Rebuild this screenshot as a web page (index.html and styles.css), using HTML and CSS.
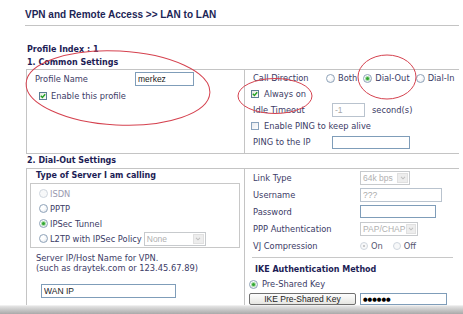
FILE: index.html
```html
<!DOCTYPE html>
<html>
<head>
<meta charset="utf-8">
<title>LAN to LAN</title>
<link rel="stylesheet" href="styles.css">
</head>
<body>
<div class="page">
  <div class="title">VPN and Remote Access &gt;&gt; LAN to LAN</div>
  <div class="heading first">Profile Index : 1</div>
  <div class="heading">1. Common Settings</div>
  <div class="table t1">
    <div class="cell left c1">
      <div class="row r16"><span class="lbl w100">Profile Name</span><input class="txt w59" type="text" value="merkez"></div>
      <div class="row r17 ind4"><span class="check on"><svg viewBox="0 0 6 6"><polyline points="0.8,2.8 2.4,4.4 5.2,1.2"/></svg></span><span>Enable this profile</span></div>
    </div>
    <div class="cell c2">
      <div class="row r16"><span class="lbl w73">Call Direction</span><span class="radio"></span><span>Both</span><span class="radio on sp"></span><span>Dial-Out</span><span class="radio sp"></span><span>Dial-In</span></div>
      <div class="row r16"><span class="check on ck"><svg viewBox="0 0 6 6"><polyline points="0.8,2.8 2.4,4.4 5.2,1.2"/></svg></span><span>Always on</span></div>
      <div class="row r16"><span class="lbl w79">Idle Timeout</span><input class="txt dis w33" type="text" value="-1"><span class="after">second(s)</span></div>
      <div class="row r16"><span class="check ck"></span><span>Enable PING to keep alive</span></div>
      <div class="row r16"><span class="lbl w79">PING to the IP</span><input class="txt w78 h13" type="text" value=""></div>
    </div>
  </div>
  <div class="heading sec">2. Dial-Out Settings</div>
  <div class="table t2">
    <div class="cell left c3">
      <div class="srv-title">Type of Server I am calling</div>
      <div class="group">
        <div class="row r15"><span class="radio dim gr"></span><span class="faint">ISDN</span></div>
        <div class="row r15"><span class="radio gr"></span><span>PPTP</span></div>
        <div class="row r15"><span class="radio on gr"></span><span>IPSec Tunnel</span></div>
        <div class="row r15"><span class="radio gr"></span><span>L2TP with IPSec Policy</span><span class="sel w62 h13 ml2"><span class="val">None</span><span class="arr"><svg viewBox="0 0 7 5"><polyline points="1,1 3.5,3.5 6,1"/></svg></span></span></div>
      </div>
      <div class="server">Server IP/Host Name for VPN.<br>(such as draytek.com or 123.45.67.89)</div>
      <input class="txt wan" type="text" value="WAN IP">
    </div>
    <div class="cell c4">
      <div class="row r17"><span class="lbl w107">Link Type</span><span class="sel w50"><span class="val">64k bps</span><span class="arr"><svg viewBox="0 0 7 5"><polyline points="1,1 3.5,3.5 6,1"/></svg></span></span></div>
      <div class="row r17"><span class="lbl w107">Username</span><input class="txt dis w82" type="text" value="???"></div>
      <div class="row r17"><span class="lbl w107">Password</span><input class="txt w76 h13" type="text" value=""></div>
      <div class="row r17"><span class="lbl w107">PPP Authentication</span><span class="sel w58 h13"><span class="val">PAP/CHAP</span><span class="arr"><svg viewBox="0 0 7 5"><polyline points="1,1 3.5,3.5 6,1"/></svg></span></span></div>
      <div class="row r17"><span class="lbl w107">VJ Compression</span><span class="radio dim onoff sm"></span><span class="faintish">On</span><span class="radio dim sm sp2"></span><span class="faintish">Off</span></div>
      <div class="rule"></div>
      <div class="ike">IKE Authentication Method</div>
      <div class="row r14 neg"><span class="radio on pk"></span><span>Pre-Shared Key</span></div>
      <div class="row keyrow"><span class="btn">IKE Pre-Shared Key</span><span class="pwd">●●●●●●</span></div>
    </div>
  </div>
</div>
<div class="bar"></div>
<svg class="marks" viewBox="0 0 463 314" width="463" height="314">
  <ellipse cx="118" cy="88" rx="92" ry="37" transform="rotate(3 118 88)"/>
  <ellipse cx="275" cy="96" rx="37" ry="17.5"/>
  <ellipse cx="387" cy="77" rx="29" ry="22"/>
</svg>
</body>
</html>
```

FILE: styles.css
```css
* { box-sizing: border-box; }
html, body { margin: 0; padding: 0; }
body {
  width: 463px;
  height: 314px;
  overflow: hidden;
  position: relative;
  background: #fff;
  font-family: "DejaVu Sans", Verdana, sans-serif;
  font-size: 8.3px;
  color: #3b3b66;
}
.page { width: 459px; padding-left: 25px; }
.title {
  height: 26px;
  padding-top: 9px;
  font: bold 10px/12px "Liberation Sans", Arial, sans-serif;
  color: #1c2556;
  border-bottom: 1px solid #c4c4c4;
}
.heading { font-weight: bold; font-size: 8px; color: #1d1d55; padding-left: 2px; line-height: 13px; }
.heading.first { margin-top: 17px; }
.heading.sec { line-height: 14px; }
.table {
  margin-left: 1px;
  border-left: 1px solid #c4c4c4;
  border-top: 1px solid #c4c4c4;
  display: grid;
  grid-template-columns: 218px 213px;
}
.t1 { border-bottom: 1px solid #c4c4c4; grid-template-rows: 83px; }
.t2 { grid-template-rows: 136px; }
.cell.left { border-right: 1px solid #c4c4c4; }
.c1 { padding: 1px 0 0 8px; }
.c2 { padding: 0 0 0 6px; }
.c3 { padding: 0; }
.c4 { padding: 0 0 0 6px; }
.row { display: flex; align-items: center; white-space: nowrap; }
.r14 { height: 14px; }
.r15 { height: 15px; }
.r16 { height: 16px; }
.r17 { height: 17px; }
.ind4 { padding-left: 4px; }
.lbl { flex: none; }
.c2 .lbl, .c4 .lbl { margin-left: 2px; }
.w73 { width: 73px; }
.w79 { width: 79px; }
.w100 { width: 100px; }
.w107 { width: 107px; }
.txt {
  margin: 0;
  height: 14px;
  border: 1px solid #7f9db9;
  padding: 0 2px;
  font: 8.5px "Liberation Sans", Arial, sans-serif;
  color: #222;
  background: #fff;
  outline: none;
}
.txt.dis { border-color: #b9c3ce; color: #a8a8a8; }
.h13 { height: 13px; }
.w33 { width: 33px; }
.w59 { width: 59px; }
.w76 { width: 76px; }
.w78 { width: 78px; }
.w82 { width: 82px; }
.after { margin-left: 7px; }
.check {
  flex: none;
  width: 8px;
  height: 8px;
  border: 1px solid #5a7d94;
  background: linear-gradient(135deg, #e3e9e0, #fdfdfb);
  margin-right: 4px;
  display: inline-flex;
  align-items: center;
  justify-content: center;
}
.check.ck { margin-right: 5px; }
.check:not(.on) { border-color: #8aa3bd; background: linear-gradient(135deg, #e6e9ee, #ffffff); }
.check svg { width: 6px; height: 6px; }
.check polyline { fill: none; stroke: #21a121; stroke-width: 1.4; }
.radio {
  flex: none;
  position: relative;
  width: 9px;
  height: 9px;
  border-radius: 50%;
  border: 1px solid #8fa3b9;
  background: radial-gradient(circle at 35% 35%, #ffffff 30%, #dce2e9);
  margin-right: 3px;
}
.radio.sp { margin-left: 6px; }
.radio.on::after {
  content: "";
  position: absolute;
  left: 2px;
  top: 2px;
  width: 3px;
  height: 3px;
  border-radius: 50%;
  background: #2fa52f;
  box-shadow: 0 0 0 1px #a6dca6;
}
.radio.gr { margin-left: 8px; margin-right: 2px; }
.radio.dim { border-color: #cfd6de; background: #f7f8f9; }
.radio.sm { width: 8px; height: 8px; }
.radio.onoff::after {
  content: "";
  position: absolute;
  left: 2px;
  top: 2px;
  width: 2px;
  height: 2px;
  border-radius: 50%;
  background: #b8b8b8;
}
.radio.sp2 { margin-left: 10px; }
.radio.pk { margin-left: -2px; margin-right: 4px; }
.faint { color: #9a9ab0; }
.faintish { color: #555570; }
.srv-title { font-weight: bold; font-size: 8px; height: 14px; line-height: 14px; padding-left: 9px; color: #1d1d55; }
.group {
  margin: 0 4px 0 3px;
  border: 1px solid #c8c8c8;
  padding: 2px 0 1px 0;
}
.sel {
  flex: none;
  display: inline-flex;
  align-items: stretch;
  justify-content: space-between;
  height: 14px;
  border: 1px solid #c7cacd;
  background: #fff;
  font: 8.5px "Liberation Sans", Arial, sans-serif;
  color: #b0b0b0;
}
.sel .val { padding-left: 2px; display: flex; align-items: center; }
.sel .arr {
  width: 11px;
  margin: 1px;
  background: #ededed;
  border: 1px solid #e0e0e0;
  display: flex;
  align-items: center;
  justify-content: center;
}
.sel .arr svg { width: 6px; height: 4px; }
.sel .arr polyline { fill: none; stroke: #c0c0c0; stroke-width: 1.3; }
.w50 { width: 50px; }
.w58 { width: 58px; }
.w62 { width: 62px; }
.ml2 { margin-left: 2px; }
.server { margin-top: 5px; padding-left: 9px; line-height: 10px; }
.wan { display: block; margin: 11px 0 0 14px; width: 135px; }
.rule { width: 201px; height: 1px; margin: 3px 0 0 1px; background: #c8c8c8; }
.ike { margin-top: 5px; height: 14px; line-height: 14px; padding-left: 4px; font-weight: bold; font-size: 8px; color: #1d1d55; }
.keyrow { margin-top: 2px; height: 12px; align-items: stretch; }
.btn {
  margin-left: -2px;
  width: 107px;
  height: 12px;
  border: 1px solid #707070;
  border-radius: 2px;
  background: linear-gradient(#fdfdfd, #e6e6e2);
  font: 8.5px/10px "Liberation Sans", Arial, sans-serif;
  color: #222;
  text-align: center;
}
.pwd {
  margin-left: 4px;
  width: 87px;
  height: 12px;
  border: 1px solid #7f9db9;
  padding-left: 2px;
  font: 5.3px/10px "DejaVu Sans", sans-serif;
  color: #000;
  font-weight: bold;
}
.bar { height: 9px; width: 463px; background: linear-gradient(#e4e4e4, #a9a9a9); border-top: 1px solid #f0f0f0; }
.marks { position: absolute; left: 0; top: 0; pointer-events: none; }
.marks ellipse { fill: none; stroke: #d5424f; stroke-width: 1; }
```
